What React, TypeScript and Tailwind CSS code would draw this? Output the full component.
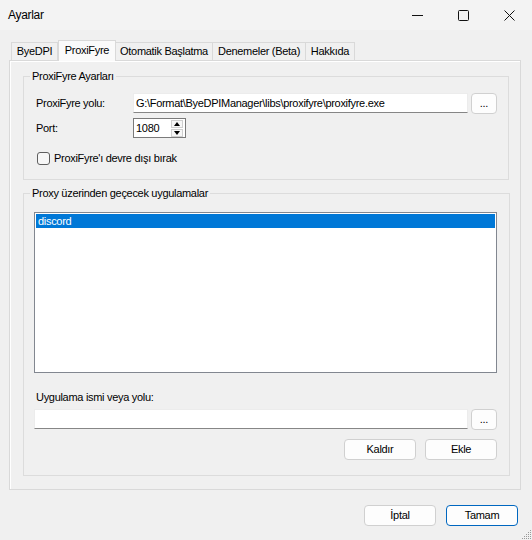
import React from "react";

const tabs = ["ByeDPI", "ProxiFyre", "Otomatik Başlatma", "Denemeler (Beta)", "Hakkıda"];
const tabWidths = ["w-[47px]", "w-[58px]", "w-[98px]", "w-[94px]", "w-[50px]"];

const Button = ({ children, primary }: { children: React.ReactNode; primary?: boolean }) => (
    <button
        className={`h-[21px] w-[72px] rounded-[4px] border bg-[#fdfdfd] leading-none ${
            primary ? "border-[#0067c0]" : "border-[#d0d0d0]"
        }`}
    >
        {children}
    </button>
);

const DotsButton = () => (
    <button className="ml-[3px] flex h-[21px] w-[26px] items-end justify-center rounded-[4px] border border-[#d0d0d0] bg-[#fdfdfd] pb-[4px] leading-none">
        ...
    </button>
);

const TextBox = ({ value, width }: { value: string; width: string }) => (
    <input
        readOnly
        value={value}
        className={`h-[20px] ${width} border border-[#ececec] border-b-[#868686] bg-white px-[2px] outline-none`}
    />
);

const GroupBox = ({ title, children }: { title: string; children: React.ReactNode }) => (
    <fieldset className="ml-[13px] w-[486px] border border-[#dcdcdc] p-0">
        <legend className="ml-[6px] px-[2px] leading-[14px]">{title}</legend>
        {children}
    </fieldset>
);

export default function App() {
    return (
        <div className="flex h-[540px] w-[532px] flex-col bg-[#f0f0f0] font-['Liberation_Sans',Arial,sans-serif] text-[11px] tracking-[-0.3px] text-black">
            {/* title bar */}
            <div className="flex h-[30px] items-center bg-[#f3f3f3]">
                <span className="pl-[8px] text-[12px] tracking-[-0.3px]">Ayarlar</span>
                <div className="ml-auto flex h-full">
                    <div className="flex w-[46px] items-center justify-center">
                        <svg width="11" height="11" viewBox="0 0 11 11">
                            <path d="M0 5.5h11" stroke="#111" strokeWidth="1" />
                        </svg>
                    </div>
                    <div className="flex w-[46px] items-center justify-center">
                        <svg width="11" height="11" viewBox="0 0 11 11">
                            <rect x="0.5" y="0.5" width="10" height="10" rx="1" fill="none" stroke="#111" strokeWidth="1" />
                        </svg>
                    </div>
                    <div className="flex w-[46px] items-center justify-center">
                        <svg width="11" height="11" viewBox="0 0 11 11">
                            <path d="M0.5 0.5l10 10M10.5 0.5l-10 10" stroke="#111" strokeWidth="1" />
                        </svg>
                    </div>
                </div>
            </div>

            <div className="px-[9px] pt-[10px]">
                {/* tabs */}
                <div className="flex h-[20px] items-end pl-[2px]">
                    {tabs.map((t, i) =>
                        i === 1 ? (
                            <div
                                key={t}
                                className={`relative z-10 -mb-px flex h-[21px] ${tabWidths[i]} items-center justify-center border border-b-0 border-[#d9d9d9] bg-[#fafafa] pb-[2px]`}
                            >
                                {t}
                            </div>
                        ) : (
                            <div
                                key={t}
                                className={`-ml-px flex h-[18px] ${tabWidths[i]} items-center justify-center border border-b-0 border-[#d9d9d9] bg-[#f0f0f0] first:ml-0`}
                            >
                                {t}
                            </div>
                        )
                    )}
                </div>

                {/* tab page */}
                <div className="h-[430px] w-[512px] border border-[#d9d9d9] bg-[#f0f0f0] shadow-[inset_1px_1px_0_#ffffff]">
                    <div className="pt-[8px]">
                        <GroupBox title="ProxiFyre Ayarları">
                            <div className="pb-[13px] pl-[12px]">
                                <div className="mt-[10px] flex h-[20px] items-center">
                                    <span className="w-[97px]">ProxiFyre yolu:</span>
                                    <TextBox value="G:\Format\ByeDPIManager\libs\proxifyre\proxifyre.exe" width="w-[335px]" />
                                    <DotsButton />
                                </div>
                                <div className="mt-[5px] flex h-[20px] items-center">
                                    <span className="w-[97px]">Port:</span>
                                    <div className="flex h-[20px] w-[53px] items-center border border-[#7a7a7a] bg-white">
                                        <span className="flex-1 pl-[2px]">1080</span>
                                        <div className="mr-[2px] flex flex-col gap-[1px]">
                                            <div className="flex h-[8px] w-[12px] items-center justify-center border border-[#cfcfcf] bg-[#f7f7f7]">
                                                <svg width="6" height="4" viewBox="0 0 6 4">
                                                    <path d="M3 0L6 4H0Z" fill="#000" />
                                                </svg>
                                            </div>
                                            <div className="flex h-[8px] w-[12px] items-center justify-center border border-[#cfcfcf] bg-[#f7f7f7]">
                                                <svg width="6" height="4" viewBox="0 0 6 4">
                                                    <path d="M0 0H6L3 4Z" fill="#000" />
                                                </svg>
                                            </div>
                                        </div>
                                    </div>
                                </div>
                                <div className="mt-[12px] flex h-[16px] items-center">
                                    <div className="ml-[1px] h-[13px] w-[13px] rounded-[3px] border border-[#5f5f5f] bg-[#f7f7f7]" />
                                    <span className="ml-[4px]">ProxiFyre'ı devre dışı bırak</span>
                                </div>
                            </div>
                        </GroupBox>

                        <div className="mt-[6px]">
                            <GroupBox title="Proxy üzerinden geçecek uygulamalar">
                                <div className="pb-[15px] pl-[10px] pr-[12px]">
                                    <div className="mt-[12px] h-[161px] w-[463px] border border-[#828790] bg-white p-[1px]">
                                        <div className="h-[14px] bg-[#0078d7] pl-[2px] leading-[14px] text-white">discord</div>
                                    </div>
                                    <div className="mt-[17px] h-[14px] pl-[2px] leading-[14px]">Uygulama ismi veya yolu:</div>
                                    <div className="mt-[5px] flex h-[21px] items-start">
                                        <TextBox value="" width="w-[434px]" />
                                        <DotsButton />
                                    </div>
                                    <div className="mt-[9px] flex justify-end gap-[9px]">
                                        <Button>Kaldır</Button>
                                        <Button>Ekle</Button>
                                    </div>
                                </div>
                            </GroupBox>
                        </div>
                    </div>
                </div>
            </div>

            {/* dialog buttons */}
            <div className="relative flex flex-1 justify-end gap-[10px] pr-[14px] pt-[15px]">
                <Button>İptal</Button>
                <Button primary>Tamam</Button>
                <svg className="absolute bottom-0 right-0" width="10" height="10" viewBox="0 0 10 10">
                    {[
                        [8, 0],
                        [6, 2],
                        [8, 2],
                        [4, 4],
                        [6, 4],
                        [8, 4],
                        [2, 6],
                        [4, 6],
                        [6, 6],
                        [8, 6],
                        [0, 8],
                        [2, 8],
                        [4, 8],
                        [6, 8],
                        [8, 8],
                    ].map(([x, y]) => (
                        <rect key={`${x}-${y}`} x={x} y={y} width="1" height="1" fill="#9a9a9a" />
                    ))}
                </svg>
            </div>
        </div>
    );
}
